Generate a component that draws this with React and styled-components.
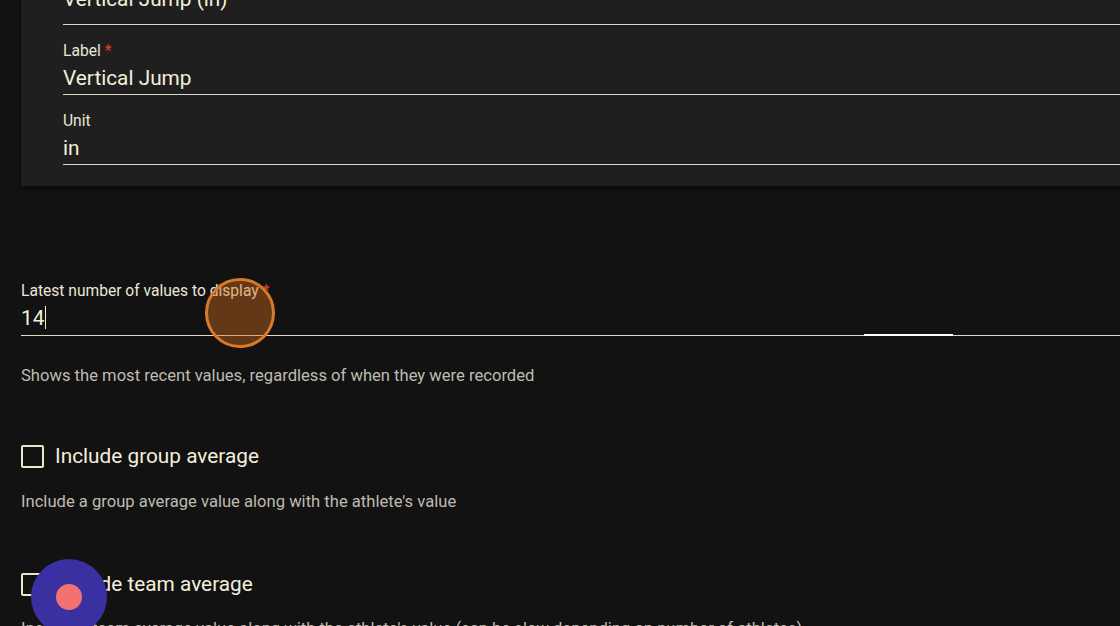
import React from 'react'
import styled, { createGlobalStyle } from 'styled-components'

const GlobalStyle = createGlobalStyle`
  html, body {
    margin: 0;
    padding: 0;
    background: #121212;
    overflow: hidden;
  }
  body {
    font-family: Roboto, "Liberation Sans", sans-serif;
    color: #efe9d6;
  }
`

const Page = styled.div`
  position: relative;
  height: 626px;
  padding-left: 21px;
  overflow: hidden;
`

const Card = styled.div`
  margin-top: -54px;
  padding: 0 0 21px 42px;
  background: #1f1f1f;
  box-shadow: 0 3px 5px rgba(0, 0, 0, 0.45);
`

const Field = styled.div`
  position: relative;
  padding-top: ${p => p.$top || 17}px;
`

const Label = styled.div`
  font-size: 15.6px;
  line-height: 18px;
  color: #ebe6d5;
`

const Star = styled.span`
  color: #e0402e;
  margin-left: 4px;
`

const Value = styled.div`
  margin-top: 4px;
  font-size: 20.8px;
  line-height: 28px;
  padding-bottom: ${p => p.$bottom || 2}px;
  border-bottom: 1.5px solid #e0d9c5;
  color: #f4eedc;
`

const Caret = styled.span`
  display: inline-block;
  width: 0;
  height: 23px;
  margin-left: 1px;
  border-left: 1.5px solid #f2ecda;
  vertical-align: -4px;
`

const FocusBar = styled.div`
  position: absolute;
  left: 843px;
  bottom: 0;
  width: 89px;
  height: 2.5px;
  background: #fffdf2;
`

const Helper = styled.p`
  margin: ${p => p.$top}px 0 0;
  font-size: 16.6px;
  line-height: 18px;
  color: #bfbbb0;
  white-space: nowrap;
`

const CheckRow = styled.label`
  display: flex;
  align-items: center;
  gap: 11px;
  margin-top: ${p => p.$top}px;
  height: 26px;
  font-size: 20.8px;
  color: #f4eedc;
`

const Box = styled.span`
  width: 19px;
  height: 19px;
  border: 2.5px solid #ece5cf;
  border-radius: 2px;
  flex-shrink: 0;
`

const ClickMark = styled.div`
  position: absolute;
  left: 205px;
  top: 278px;
  width: 64px;
  height: 64px;
  border-radius: 50%;
  border: 3px solid #d97a2b;
  background: rgba(214, 110, 30, 0.42);
`

const Pointer = styled.div`
  position: absolute;
  left: 31px;
  top: 559px;
  width: 76px;
  height: 76px;
  border-radius: 50%;
  background: #3a30a2;
  display: flex;
  align-items: center;
  justify-content: center;
`

const Dot = styled.span`
  width: 26px;
  height: 26px;
  border-radius: 50%;
  background: #f27272;
`

const App = () => {
  return (
    <>
      <GlobalStyle />
      <Page>
        <Card>
          <Field>
            <Label>Metric</Label>
            <Value $bottom={11}>Vertical Jump (in)</Value>
          </Field>
          <Field>
            <Label>Label<Star>*</Star></Label>
            <Value>Vertical Jump</Value>
          </Field>
          <Field>
            <Label>Unit</Label>
            <Value>in</Value>
          </Field>
        </Card>

        <Field $top={96}>
          <Label>Latest number of values to display<Star>*</Star></Label>
          <Value $bottom={3}>14<Caret /></Value>
          <FocusBar />
        </Field>
        <Helper $top={31}>Shows the most recent values, regardless of when they were recorded</Helper>

        <CheckRow $top={58}>
          <Box />
          Include group average
        </CheckRow>
        <Helper $top={24}>Include a group average value along with the athlete's value</Helper>

        <CheckRow $top={60}>
          <Box />
          Include team average
        </CheckRow>
        <Helper $top={23}>Include a team average value along with the athlete's value (can be slow depending on number of athletes)</Helper>

        <ClickMark />
        <Pointer>
          <Dot />
        </Pointer>
      </Page>
    </>
  )
}

export default App
